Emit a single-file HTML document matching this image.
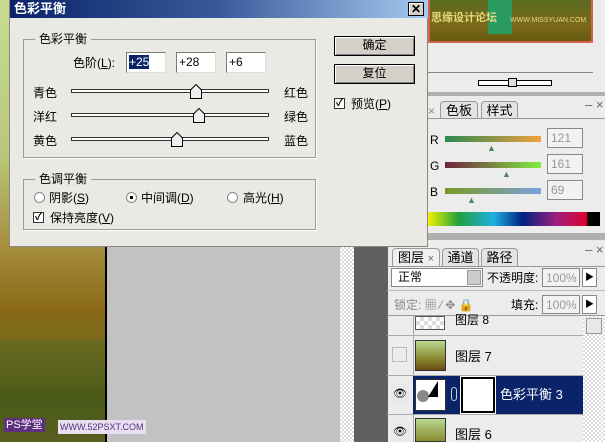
<!DOCTYPE html>
<html><head><meta charset="utf-8"><style>
*{margin:0;padding:0;box-sizing:border-box}
body{width:605px;height:442px;overflow:hidden;position:relative;font-family:"Liberation Sans","Noto Sans CJK SC",sans-serif;font-size:12px;color:#000;background:#c2c2c2}
.a{position:absolute}
.t{position:absolute;white-space:nowrap;font-size:12px;line-height:14px}
.grass{left:0;top:0;width:106px;height:442px;background:linear-gradient(180deg,#c8dc90 0%,#b8c878 35%,#a89040 55%,#8a6a18 70%,#6a6a20 85%,#5a5a18 100%)}
.dlg{left:9px;top:0;width:419px;height:247px;background:#ebe9e4;border:1px solid #888;border-top:none}
.title{left:0;top:0;width:418px;height:18px;background:linear-gradient(90deg,#0a246a,#3a5a9a 50%,#a6caf0)}
.grp{border:1px solid #9a9a9a;box-shadow:1px 1px 0 #fff}
.lbl{background:#ebe9e4;padding:0 4px}
.inp{background:#fff;border:1px solid #7a7a7a;border-right-color:#ddd;border-bottom-color:#ddd;height:21px;font-size:12px;line-height:19px;padding-left:2px}
.track{height:4px;border:1px solid #333;background:#fff;width:198px}
.btn{background:#d4d0c8;border:1px solid #000;box-shadow:inset 1px 1px #fff,inset -1px -1px #808080;text-align:center;line-height:17px}
.chk{width:11px;height:11px;border:1px solid #333;background:#fff;font-size:10px;line-height:9px;text-align:center;font-weight:bold}
.rad{width:11px;height:11px;border-radius:50%;border:1px solid #888;background:#fff}
.panel{background:#ececec}
.tab{border:1px solid #999;border-bottom:none;border-radius:4px 4px 0 0;background:#e4e4e4;text-align:center;line-height:18px;font-size:13px}
.gbox{border:1px solid #888;background:#f2f2f2;color:#999;padding-left:3px;line-height:18px}
</style></head><body>
<div class="a grass"></div>
<div class="a" style="left:0;top:340px;width:106px;height:102px;background:linear-gradient(180deg,#6a6a20,#4a5a18 60%,#5a6020)"></div>
<div class="a" style="left:105px;top:245px;width:2px;height:197px;background:#000"></div>
<div class="a" style="left:340px;top:245px;width:14px;height:197px;background:repeating-conic-gradient(#ddd 0 25%,#fff 0 50%) 0 0/4px 4px"></div>
<div class="a" style="left:354px;top:245px;width:33px;height:197px;background:#606060"></div>
<div class="t" style="left:4px;top:418px;color:#fff;background:#603080;font-size:11px;padding:0 2px">PS学堂</div>
<div class="t" style="left:58px;top:420px;color:#503080;background:#e8e0f0;font-size:9px;padding:0 2px">WWW.52PSXT.COM</div>

<div class="a panel" style="left:387px;top:0;width:218px;height:442px;border-left:1px solid #606060"></div>
<div class="a" style="left:428px;top:0;width:165px;height:43px;background:linear-gradient(180deg,#5a6a20,#7a6a18 60%,#6a5a10);border:2px solid #d86050;border-top:none"></div>
<div class="a" style="left:488px;top:0;width:24px;height:34px;background:#2a9a60"></div>
<div class="t" style="left:431px;top:11px;color:#e8d880;font-size:11px;font-weight:bold">思缘设计论坛</div>
<div class="t" style="left:510px;top:14px;color:#e8d880;font-size:7px">WWW.MISSYUAN.COM</div>
<div class="a" style="left:428px;top:72px;width:165px;height:1px;background:#888"></div>
<div class="a" style="left:478px;top:80px;width:74px;height:6px;border:1px solid #000;background:#fff"></div>
<div class="a" style="left:508px;top:78px;width:9px;height:9px;background:#ddd;border:1px solid #000"></div>
<div class="a" style="left:387px;top:92px;width:218px;height:4px;background:#b0b0b0"></div>
<div class="t" style="left:585px;top:98px;color:#666;font-size:13px">– ×</div>
<div class="a tab" style="left:440px;top:101px;width:38px;height:18px">色板</div>
<div class="a tab" style="left:481px;top:101px;width:37px;height:18px">样式</div>
<div class="t" style="left:428px;top:104px;color:#888">×</div>
<div class="a" style="left:428px;top:118px;width:177px;height:1px;background:#999"></div>
<div class="t" style="left:430px;top:133px">R</div>
<div class="a" style="left:445px;top:136px;width:96px;height:6px;background:linear-gradient(90deg,#2a8a50,#f0a040)"></div>
<div class="a gbox" style="left:547px;top:128px;width:36px;height:20px">121</div>
<div class="t" style="left:430px;top:159px">G</div>
<div class="a" style="left:445px;top:162px;width:96px;height:6px;background:linear-gradient(90deg,#702040,#80f040)"></div>
<div class="a gbox" style="left:547px;top:154px;width:36px;height:20px">161</div>
<div class="t" style="left:430px;top:185px">B</div>
<div class="a" style="left:445px;top:188px;width:96px;height:6px;background:linear-gradient(90deg,#7a9a20,#7aa0e0)"></div>
<div class="a gbox" style="left:547px;top:180px;width:36px;height:20px">69</div>
<div class="t" style="left:487px;top:141px;color:#4a8a5a;font-size:9px">▲</div>
<div class="t" style="left:502px;top:167px;color:#4a8a5a;font-size:9px">▲</div>
<div class="t" style="left:467px;top:193px;color:#4a8a5a;font-size:9px">▲</div>
<div class="a" style="left:428px;top:212px;width:172px;height:14px;background:linear-gradient(90deg,#f0f000,#20a040 18%,#20b0e0 38%,#002080 55%,#a02080 75%,#e00030 92%,#000 93%)"></div>
<div class="a" style="left:387px;top:233px;width:218px;height:7px;background:#b0b0b0"></div>

<div class="t" style="left:585px;top:243px;color:#666;font-size:13px">– ×</div>
<div class="a tab" style="left:392px;top:248px;width:48px;height:19px;background:#f0f0f0">图层 <span style="font-size:11px;color:#666">×</span></div>
<div class="a tab" style="left:442px;top:248px;width:37px;height:19px">通道</div>
<div class="a tab" style="left:481px;top:248px;width:37px;height:19px">路径</div>
<div class="a" style="left:387px;top:266px;width:218px;height:1px;background:#999"></div>
<div class="a" style="left:391px;top:268px;width:92px;height:19px;background:#fff;border:1px solid #888;padding-left:6px;line-height:17px">正常</div>
<div class="a" style="left:467px;top:270px;width:14px;height:15px;background:#ccc;border:1px solid #999"></div>
<div class="t" style="left:487px;top:271px">不透明度:</div>
<div class="a gbox" style="left:542px;top:268px;width:38px;height:19px">100%</div>
<div class="a" style="left:582px;top:268px;width:15px;height:19px;border:1px solid #888;background:#fff;font-size:9px;text-align:center;line-height:17px">▶</div>
<div class="a" style="left:387px;top:290px;width:218px;height:1px;background:#bbb"></div>
<div class="t" style="left:394px;top:298px;color:#888">锁定: ▦ ⁄ ✥ 🔒</div>
<div class="t" style="left:511px;top:298px">填充:</div>
<div class="a gbox" style="left:542px;top:295px;width:38px;height:19px">100%</div>
<div class="a" style="left:582px;top:295px;width:15px;height:19px;border:1px solid #888;background:#fff;font-size:9px;text-align:center;line-height:17px">▶</div>
<div class="a" style="left:387px;top:315px;width:218px;height:1px;background:#999"></div>
<div class="a" style="left:583px;top:316px;width:22px;height:126px;background:repeating-conic-gradient(#ddd 0 25%,#fff 0 50%) 0 0/4px 4px"></div>
<div class="a" style="left:586px;top:318px;width:16px;height:16px;background:#e8e8e8;border:1px solid #999"></div>
<div class="a" style="left:413px;top:316px;width:1px;height:126px;background:#aaa"></div>
<div class="a" style="left:415px;top:316px;width:30px;height:14px;background:repeating-conic-gradient(#ddd 0 25%,#fff 0 50%) 0 0/8px 8px;border:1px solid #555"></div>
<div class="t" style="left:455px;top:313px">图层 8</div>
<div class="a" style="left:387px;top:335px;width:196px;height:1px;background:#aaa"></div>
<div class="a" style="left:392px;top:347px;width:15px;height:15px;border:1px solid #bbb"></div>
<div class="a" style="left:415px;top:340px;width:31px;height:31px;background:linear-gradient(180deg,#b8d890,#8a8a30 60%,#6a4a10);border:1px solid #333"></div>
<div class="t" style="left:455px;top:350px;font-size:13px">图层 7</div>
<div class="a" style="left:387px;top:375px;width:196px;height:1px;background:#aaa"></div>
<div class="a" style="left:413px;top:376px;width:170px;height:38px;background:#0a246a"></div>
<div class="a" style="left:391px;top:385px;width:18px;height:18px;background:#e8e8e8;text-align:center;line-height:18px;font-size:11px">👁</div>
<div class="a" style="left:415px;top:379px;width:31px;height:32px;background:#fff;border:1px solid #333"></div>
<div class="a" style="left:417px;top:390px;width:12px;height:12px;border-radius:50%;background:#888"></div>
<div class="a" style="left:428px;top:381px;width:0;height:0;border-left:10px solid transparent;border-bottom:16px solid #000"></div>
<div class="a" style="left:451px;top:387px;width:6px;height:14px;border:1px solid #ccc;border-radius:3px"></div>
<div class="a" style="left:461px;top:377px;width:34px;height:36px;background:#fff;border:2px solid #000;outline:1px solid #fff"></div>
<div class="t" style="left:500px;top:388px;color:#fff;font-size:13px">色彩平衡 3</div>
<div class="a" style="left:387px;top:414px;width:196px;height:1px;background:#aaa"></div>
<div class="a" style="left:391px;top:423px;width:18px;height:18px;background:#e8e8e8;text-align:center;line-height:18px;font-size:11px">👁</div>
<div class="a" style="left:415px;top:418px;width:31px;height:24px;background:linear-gradient(180deg,#b8d890,#8a8a30);border:1px solid #333"></div>
<div class="t" style="left:455px;top:428px;font-size:13px">图层 6</div>

<div class="a dlg">
 <div class="a title"></div>
 <div class="t" style="left:4px;top:2px;color:#fff;font-weight:bold;font-size:13px">色彩平衡</div>
 <div class="a" style="left:398px;top:2px;width:16px;height:14px;background:#d4d0c8;border:1px solid #000;box-shadow:inset 1px 1px #fff;text-align:center;font-weight:bold;line-height:12px;font-size:12px">✕</div>
 <div class="a grp" style="left:13px;top:39px;width:293px;height:119px"></div>
 <div class="t lbl" style="left:25px;top:32px">色彩平衡</div>
 <div class="t" style="left:63px;top:56px">色阶(<u>L</u>):</div>
 <div class="a inp" style="left:116px;top:52px;width:40px"><span style="background:#0a246a;color:#fff">+25</span></div>
 <div class="a inp" style="left:166px;top:52px;width:40px">+28</div>
 <div class="a inp" style="left:216px;top:52px;width:40px">+6</div>
 <div class="t" style="left:23px;top:86px">青色</div><div class="t" style="left:274px;top:86px">红色</div>
 <div class="t" style="left:23px;top:110px">洋红</div><div class="t" style="left:274px;top:110px">绿色</div>
 <div class="t" style="left:23px;top:134px">黄色</div><div class="t" style="left:274px;top:134px">蓝色</div>
 <div class="a track" style="left:61px;top:89px"></div>
 <div class="a track" style="left:61px;top:113px"></div>
 <div class="a track" style="left:61px;top:137px"></div>
 <svg class="a" style="left:180px;top:84px" width="12" height="15"><path d="M0.5 14.5V6L6 0.5 11.5 6V14.5Z" fill="#eee" stroke="#000"/></svg>
 <svg class="a" style="left:183px;top:108px" width="12" height="15"><path d="M0.5 14.5V6L6 0.5 11.5 6V14.5Z" fill="#eee" stroke="#000"/></svg>
 <svg class="a" style="left:161px;top:132px" width="12" height="15"><path d="M0.5 14.5V6L6 0.5 11.5 6V14.5Z" fill="#eee" stroke="#000"/></svg>
 <div class="a grp" style="left:13px;top:179px;width:293px;height:51px"></div>
 <div class="t lbl" style="left:25px;top:172px">色调平衡</div>
 <div class="a rad" style="left:24px;top:192px"></div><div class="t" style="left:39px;top:191px">阴影(<u>S</u>)</div>
 <div class="a rad" style="left:116px;top:192px"><div style="width:3px;height:3px;background:#000;margin:3px"></div></div><div class="t" style="left:131px;top:191px">中间调(<u>D</u>)</div>
 <div class="a rad" style="left:217px;top:192px"></div><div class="t" style="left:233px;top:191px">高光(<u>H</u>)</div>
 <div class="a chk" style="left:23px;top:212px">✓</div><div class="t" style="left:40px;top:211px">保持亮度(<u>V</u>)</div>
 <div class="a btn" style="left:324px;top:36px;width:81px;height:20px">确定</div>
 <div class="a btn" style="left:324px;top:64px;width:81px;height:20px">复位</div>
 <div class="a chk" style="left:324px;top:98px">✓</div><div class="t" style="left:341px;top:97px">预览(<u>P</u>)</div>
</div>
</body></html>
